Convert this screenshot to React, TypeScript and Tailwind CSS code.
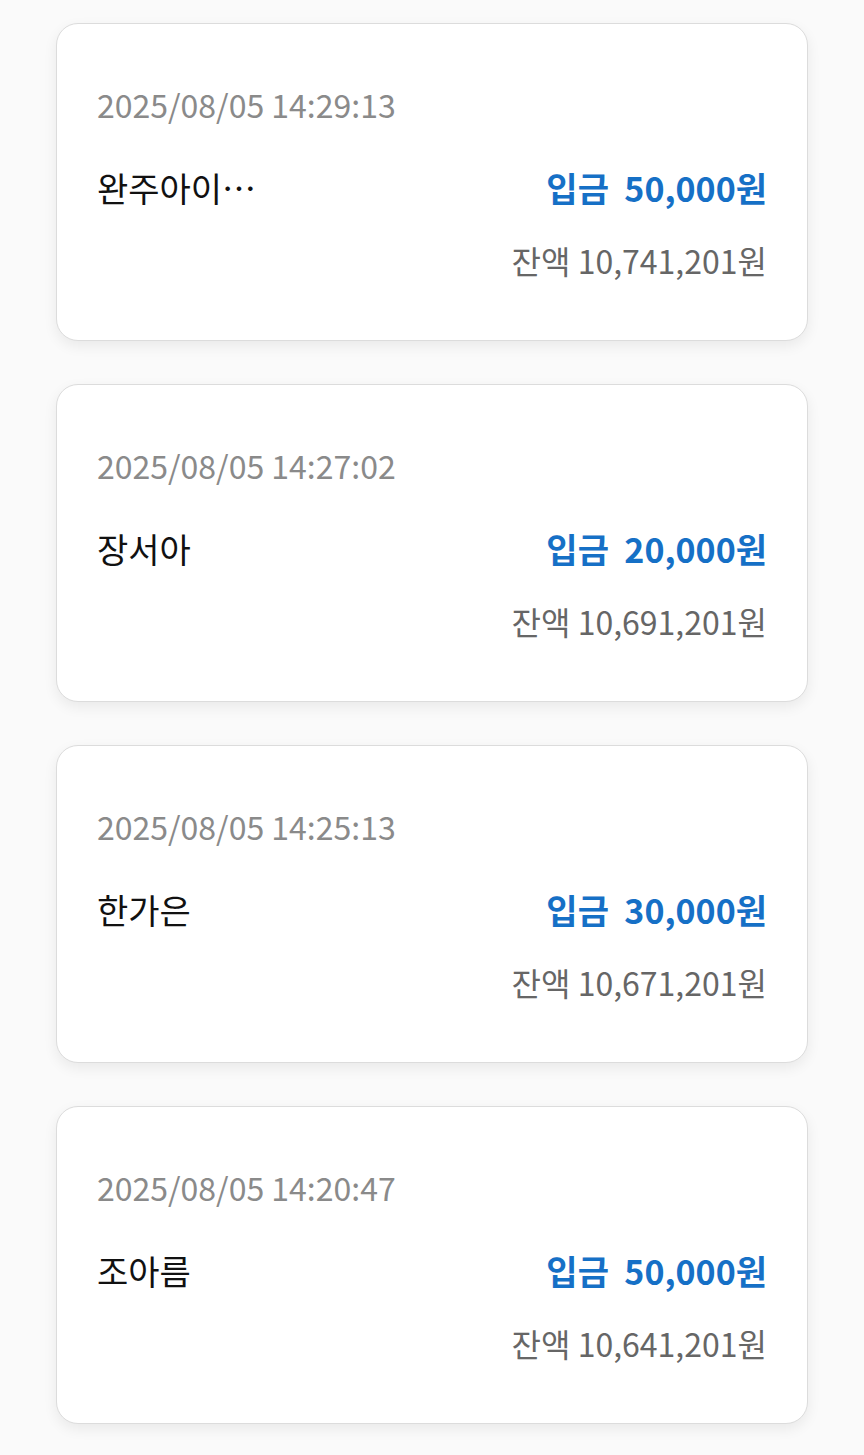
const rows = [
  { time: "2025/08/05 14:29:13", name: "완주아이…", amount: "50,000", balance: "10,741,201" },
  { time: "2025/08/05 14:27:02", name: "장서아", amount: "20,000", balance: "10,691,201" },
  { time: "2025/08/05 14:25:13", name: "한가은", amount: "30,000", balance: "10,671,201" },
  { time: "2025/08/05 14:20:47", name: "조아름", amount: "50,000", balance: "10,641,201" },
];

const font = { fontFamily: '"Noto Sans CJK KR", "Noto Sans", sans-serif' };

function TxCard({ time, name, amount, balance }: (typeof rows)[number]) {
  return (
    <div className="h-[318px] rounded-[22px] border border-[#dcdcdc] bg-white px-[40px] pt-[60px] shadow-[0_5px_14px_rgba(0,0,0,0.07)]">
      <div className="text-[32px] leading-[40px] text-[#8a8a8a]">{time}</div>
      <div className="mt-[42px] flex items-center justify-between">
        <span className="text-[34px] leading-[44px] text-[#111]">{name}</span>
        <span className="text-[34px] leading-[44px] font-bold text-[#1670c6]">
          입금&nbsp;&nbsp;{amount}원
        </span>
      </div>
      <div className="mt-[28px] text-right text-[32px] leading-[44px] text-[#666]">
        잔액 {balance}원
      </div>
    </div>
  );
}

export default function App() {
  return (
    <div className="min-h-screen bg-[#fafafa] px-[56px] pt-[23px] pb-[30px]" style={font}>
      <div className="flex flex-col gap-[43px]">
        {rows.map(r => (
          <TxCard key={r.time} {...r} />
        ))}
      </div>
    </div>
  );
}
